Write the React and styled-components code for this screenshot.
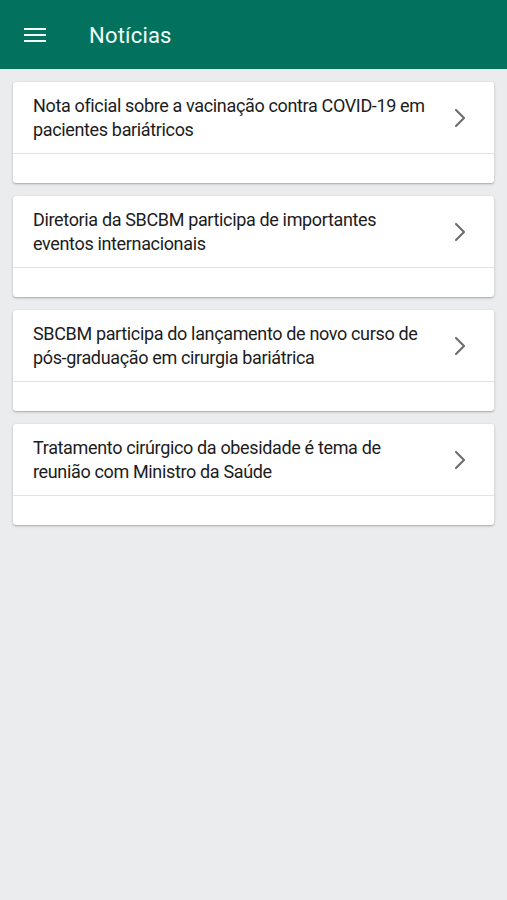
import React from "react";
import styled, { createGlobalStyle } from "styled-components";

const Global = createGlobalStyle`
  html, body { margin: 0; padding: 0; background: #ebeced; }
  body { font-family: Roboto, "Noto Sans", sans-serif; }
  #root { min-height: 900px; background: #ebeced; }
`;

const Page = styled.div`
  min-height: 900px;
  background: #ebeced;
`;

const AppBar = styled.header`
  height: 69px;
  background: #02725f;
  display: flex;
  align-items: center;
  padding-left: 24px;
  gap: 43px;
  color: #f3fffb;
`;

const Title = styled.h1`
  margin: 0;
  font-size: 22px;
  font-weight: 400;
  letter-spacing: 0.2px;
  line-height: 1;
  padding-top: 3px;
`;

const Burger = styled.div`
  width: 22px;
  display: flex;
  flex-direction: column;
  gap: 4px;
  padding-top: 1px;
  & > span {
    height: 2px;
    background: #f3fffb;
    display: block;
  }
`;

const List = styled.main`
  display: flex;
  flex-direction: column;
  gap: 13px;
  padding: 13px 13px 0 13px;
`;

const Card = styled.article`
  background: #fff;
  border-radius: 3px;
  box-shadow: 0 1px 3px rgba(0, 0, 0, 0.22), 0 1px 1px rgba(0, 0, 0, 0.1);
  overflow: hidden;
`;

const Row = styled.div`
  display: flex;
  align-items: center;
  justify-content: space-between;
  padding: 12px 18px 11px 20px;
  border-bottom: 1px solid #e3e3e3;
`;

const Headline = styled.p`
  margin: 0;
  font-size: 18px;
  line-height: 24px;
  letter-spacing: -0.35px;
  color: #1c1c1c;
  max-width: 400px;
`;

const Chevron = styled.svg`
  flex: none;
  width: 32px;
  height: 32px;
  stroke: #6f6f6f;
`;

const Footer = styled.div`
  height: 29px;
`;

const news = [
  "Nota oficial sobre a vacinação contra COVID-19 em pacientes bariátricos",
  "Diretoria da SBCBM participa de importantes eventos internacionais",
  "SBCBM participa do lançamento de novo curso de pós-graduação em cirurgia bariátrica",
  "Tratamento cirúrgico da obesidade é tema de reunião com Ministro da Saúde",
];

export default function App() {
  return (
    <Page>
      <Global />
      <AppBar>
        <Burger>
          <span />
          <span />
          <span />
        </Burger>
        <Title>Notícias</Title>
      </AppBar>
      <List>
        {news.map((n) => (
          <Card key={n}>
            <Row>
              <Headline>{n}</Headline>
              <Chevron viewBox="0 0 24 24" fill="none" strokeWidth="1.6" strokeLinecap="round" strokeLinejoin="round">
                <path d="m9 18 6-6-6-6" />
              </Chevron>
            </Row>
            <Footer />
          </Card>
        ))}
      </List>
    </Page>
  );
}
